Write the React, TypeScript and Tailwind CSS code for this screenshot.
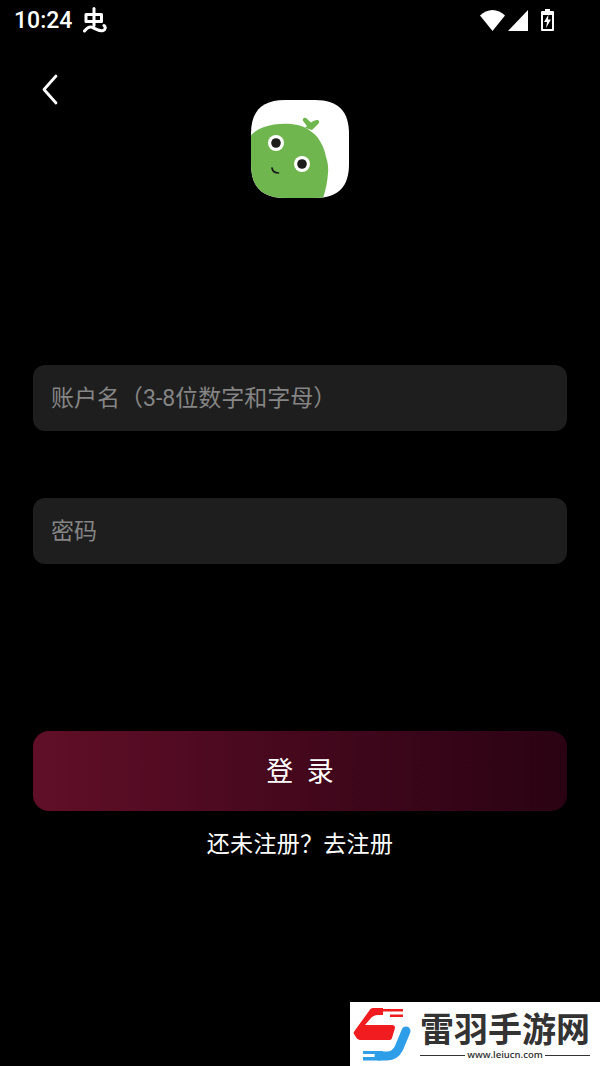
const cjk = "font-['Roboto','Noto_Sans_CJK_SC',sans-serif]";

const StatusBar = () => (
  <div className="flex h-10 items-center justify-between pl-[14px] pr-[46px] text-white">
    <div className="flex items-center gap-[11px]">
      <span className="font-['Roboto',sans-serif] text-[23px] font-medium leading-none">10:24</span>
      <svg width="24" height="26" viewBox="0 0 24 26" fill="none" stroke="white" strokeWidth="3" strokeLinecap="round" strokeLinejoin="round">
        <path d="M11 1.500v17" />
        <path d="M3 7.500h15.500v7H3z" />
        <path d="M1.500 24c3-3.500 5-5 8-3.500 3 1.500 7 4 10.500 3 2.500-.8 3-3.500 1-5" />
      </svg>
    </div>
    <div className="flex items-center gap-[3px]">
      <svg width="25" height="21" viewBox="0 0 25 21" fill="white"><path d="M12.500 21L0 5.500C3.500 2.200 8 0 12.500 0S21.500 2.200 25 5.500z" /></svg>
      <svg width="20" height="21" viewBox="0 0 20 21" fill="white"><path d="M20 0v21H0z" /></svg>
      <svg className="ml-[10px]" width="13" height="22" viewBox="0 0 13 22">
        <path fillRule="evenodd" fill="white" d="M4 0h5v2h3a1 1 0 0 1 1 1v18a1 1 0 0 1-1 1H1a1 1 0 0 1-1-1V3a1 1 0 0 1 1-1h3zM2 6v14h9V6z" />
        <path fill="white" d="M7.500 5.500L3 13h3L5 19l5-8.500H7z" />
      </svg>
    </div>
  </div>
);

const Logo = () => (
  <svg width="98" height="98" viewBox="0 0 98 98" className="block">
    <defs>
      <clipPath id="logo-clip">
        <path d="M34 0h30c24 0 34 12 34 34v30c0 22-10 34-34 34H34C10 98 0 86 0 64V34C0 12 10 0 34 0z" />
      </clipPath>
    </defs>
    <g clipPath="url(#logo-clip)">
      <rect width="98" height="98" fill="white" />
      <path d="M0 35C6 29 14 26 23 24.500c6-.8 12-.8 17-.5 5 .3 9 1.500 13 3 6 3 11 7 14 11 4 6 7 12 8 19 2 6 2.500 11 2 16-.5 8-2 16-5 25H0z" fill="#6fb64f" />
      <path d="M54 28l2-2-4-5c-1-2 1-4 3-3l5 4.500c2-1.500 4-2.500 6-2.500 2 0 3 2 1.500 3.500L61 30z" fill="#6fb64f" />
      <circle cx="25" cy="43" r="8" fill="white" />
      <circle cx="25" cy="43" r="4.800" fill="#1d1d1b" />
      <circle cx="51" cy="64" r="8" fill="white" />
      <circle cx="51" cy="64" r="4.800" fill="#1d1d1b" />
      <path d="M21 68c.5 3 3 5 6.500 5" fill="none" stroke="#1d1d1b" strokeWidth="1.700" strokeLinecap="round" />
    </g>
  </svg>
);

const Field = ({ label }: { label: string }) => (
  <div className={`flex h-[66px] items-center rounded-xl bg-[#1e1e1e] pl-[18px] pt-[3px] text-[23px] text-[#858585] ${cjk}`}>
    {label}
  </div>
);

const Watermark = () => (
  <div className="absolute bottom-0 right-0 flex h-[64px] w-[250px] gap-[8px] bg-white pl-[3px] pt-[5px]">
    <svg width="59" height="54" viewBox="0 0 59 54" className="shrink-0">
      <path d="M20 1h10v7h-5c-3 0-5 1-7 3l-6 7h27c2 0 3 1 3 3l-3 10c-.5 1.500-1.500 2-3 2H8c-2 0-3-.5-4.500-2L1 27c-.5-1-.5-2 .5-3L16 4c1-2 2.500-3 4-3z" fill="#f01c1f" />
      <path d="M30 2h20v2.500H30zM37 7.500h13V10H37z" fill="#f01c1f" />
      <path d="M53 24l-7 17q-4 8-12 8H26" fill="none" stroke="#2f9ee8" strokeWidth="9" strokeLinecap="round" />
      <path d="M10 44h20v3H10zM10 50h18v3.500H10z" fill="#2f9ee8" />
    </svg>
    <div className="flex flex-col items-center pt-[3px]">
      <span className="font-['Noto_Sans_CJK_SC',sans-serif] text-[34px] font-bold leading-[36px] text-[#333]">雷羽手游网</span>
      <div className="mt-[3px] flex w-[170px] items-center gap-[2px]">
        <span className="h-px flex-1 bg-[#333]" />
        <span className="font-['Open_Sans',sans-serif] text-[9.500px] font-semibold leading-3 text-[#333]">www.leiucn.com</span>
        <span className="h-px flex-1 bg-[#333]" />
      </div>
    </div>
  </div>
);

export default function App() {
  return (
    <div className="relative h-[1066px] w-[600px] overflow-hidden bg-black">
      <StatusBar />
      <div className="relative mt-[60px] flex justify-center">
        <svg className="absolute left-[40px] top-[-26px]" width="20" height="32" viewBox="0 0 20 32" fill="none" stroke="white" strokeWidth="2.800" strokeLinecap="round" strokeLinejoin="round">
          <path d="M16 2L4 15.500 16 29" />
        </svg>
        <Logo />
      </div>
      <div className="mt-[167px] flex flex-col px-[33px]">
        <Field label="账户名（3-8位数字和字母）" />
        <div className="mt-[67px]">
          <Field label="密码" />
        </div>
        <button className={`mt-[167px] flex h-[80px] items-center justify-center rounded-2xl bg-gradient-to-r from-[#610f28] to-[#2a0312] pt-[2px] text-[27px] text-white ${cjk}`}>
          登&nbsp;&nbsp;录
        </button>
        <p className={`mt-[18px] text-center text-[23px] leading-[32px] tracking-[0.3px] text-white ${cjk}`}>还未注册？去注册</p>
      </div>
      <Watermark />
    </div>
  );
}
